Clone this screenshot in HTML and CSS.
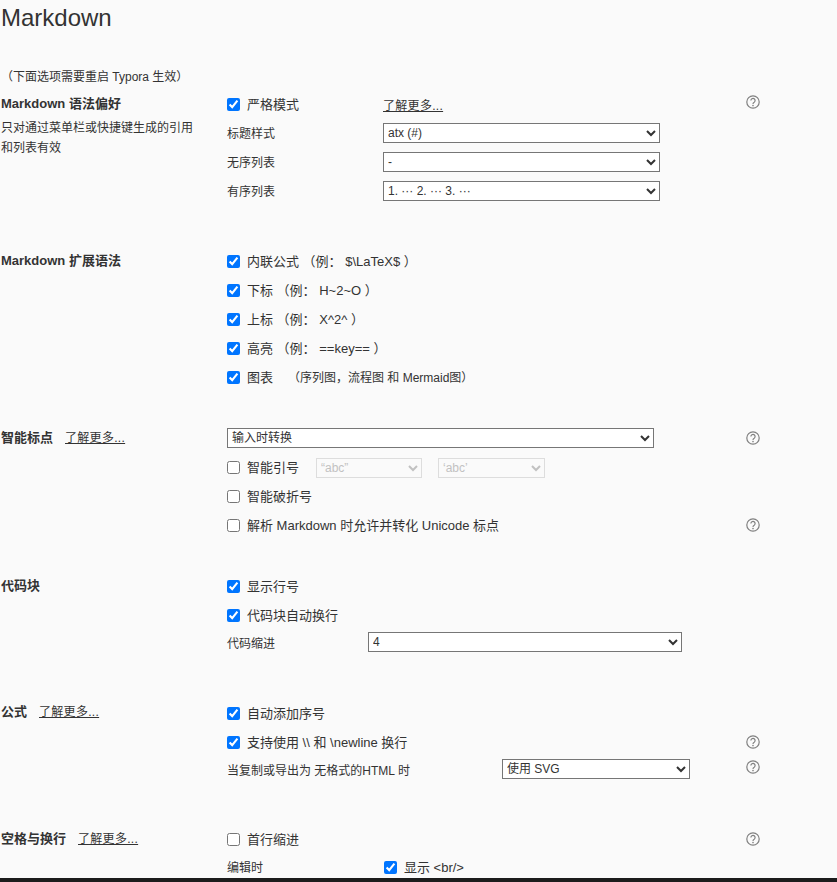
FILE: index.html
```html
<!DOCTYPE html>
<html lang="zh-CN">
<head>
<meta charset="utf-8">
<title>Markdown</title>
<link rel="stylesheet" href="styles.css">
</head>
<body>
<svg class="defs" width="0" height="0" aria-hidden="true">
  <symbol id="help" viewBox="0 0 14 14">
    <circle cx="7" cy="7" r="6.2" fill="none" stroke="#808080" stroke-width="1.2"/>
    <path d="M4.9 5.5a2.1 2.1 0 1 1 3.3 1.7c-.8.5-1.2.9-1.2 1.8" fill="none" stroke="#808080" stroke-width="1.2"/>
    <circle cx="7" cy="10.6" r=".8" fill="#808080"/>
  </symbol>
</svg>
<main class="page">
  <h1 class="title">Markdown</h1>
  <p class="restart">（下面选项需要重启 Typora 生效）</p>

  <section class="section s1">
    <div class="side">
      <div class="heading">Markdown 语法偏好</div>
      <p class="desc">只对通过菜单栏或快捷键生成的引用和列表有效</p>
    </div>
    <div class="rows">
      <div class="row">
        <label class="check w156"><input type="checkbox" checked>严格模式</label>
        <a class="more" href="#">了解更多...</a>
        <svg class="help raised"><use href="#help"/></svg>
      </div>
      <div class="row up"><span class="label w156">标题样式</span><select class="sel w277"><option>atx (#)</option></select></div>
      <div class="row up"><span class="label w156">无序列表</span><select class="sel w277"><option>-</option></select></div>
      <div class="row up"><span class="label w156">有序列表</span><select class="sel w277"><option>1. ··· 2. ··· 3. ···</option></select></div>
    </div>
  </section>

  <section class="section s2">
    <div class="side"><div class="heading">Markdown 扩展语法</div></div>
    <div class="rows">
      <div class="row"><label class="check"><input type="checkbox" checked>内联公式 （例： $\LaTeX$ ）</label></div>
      <div class="row"><label class="check"><input type="checkbox" checked>下标 （例： H~2~O ）</label></div>
      <div class="row"><label class="check"><input type="checkbox" checked>上标 （例： X^2^ ）</label></div>
      <div class="row"><label class="check"><input type="checkbox" checked>高亮 （例： ==key== ）</label></div>
      <div class="row"><label class="check"><input type="checkbox" checked>图表<span class="note">（序列图，流程图 和 Mermaid图）</span></label></div>
    </div>
  </section>

  <section class="section s3">
    <div class="side"><div class="heading">智能标点<a class="more gap" href="#">了解更多...</a></div></div>
    <div class="rows">
      <div class="row up"><select class="sel w427"><option>输入时转换</option></select><svg class="help low"><use href="#help"/></svg></div>
      <div class="row">
        <label class="check w89"><input type="checkbox">智能引号</label>
        <select class="sel w106" disabled><option>“abc”</option></select>
        <select class="sel w107 ml16" disabled><option>‘abc’</option></select>
      </div>
      <div class="row"><label class="check"><input type="checkbox">智能破折号</label></div>
      <div class="row"><label class="check"><input type="checkbox">解析 Markdown 时允许并转化 Unicode 标点</label><svg class="help"><use href="#help"/></svg></div>
    </div>
  </section>

  <section class="section s4">
    <div class="side"><div class="heading">代码块</div></div>
    <div class="rows">
      <div class="row"><label class="check"><input type="checkbox" checked>显示行号</label></div>
      <div class="row"><label class="check"><input type="checkbox" checked>代码块自动换行</label></div>
      <div class="row short up"><span class="label w141">代码缩进</span><select class="sel w314"><option>4</option></select></div>
    </div>
  </section>

  <section class="section s5">
    <div class="side"><div class="heading">公式<a class="more gap" href="#">了解更多...</a></div></div>
    <div class="rows">
      <div class="row"><label class="check"><input type="checkbox" checked>自动添加序号</label></div>
      <div class="row"><label class="check"><input type="checkbox" checked>支持使用 \\ 和 \newline 换行</label><svg class="help"><use href="#help"/></svg></div>
      <div class="row short up"><span class="label w275">当复制或导出为 无格式的HTML 时</span><select class="sel w188"><option>使用 SVG</option></select><svg class="help mid"><use href="#help"/></svg></div>
    </div>
  </section>

  <section class="section s6">
    <div class="side"><div class="heading">空格与换行<a class="more gap" href="#">了解更多...</a></div></div>
    <div class="rows">
      <div class="row"><label class="check"><input type="checkbox">首行缩进</label><svg class="help"><use href="#help"/></svg></div>
      <div class="row short"><span class="label w157">编辑时</span><label class="check"><input type="checkbox" checked>显示 &lt;br/&gt;</label></div>
    </div>
  </section>
</main>
<div class="bar"></div>
</body>
</html>
```
FILE: styles.css
```css
* { box-sizing: border-box; }
html, body { margin: 0; height: 882px; overflow: hidden; }
body {
  display: flex;
  flex-direction: column;
  background: #fafafa;
  color: #333;
  font-family: "Liberation Sans", "Noto Sans CJK SC", sans-serif;
  font-size: 13px;
}
.defs { position: absolute; }
.page { flex: 1; min-height: 0; overflow: hidden; padding-left: 1px; }
.bar { height: 4px; background: #1c1c1c; }
.title { margin: 0; padding-top: 3px; font-size: 24px; font-weight: 400; line-height: 30px; }
.restart { margin: 35px 0 0; line-height: 18px; font-size: 12px; }
.section { display: flex; }
.s1 { margin-top: 4px; }
.s2 { margin-top: 41px; }
.s3 { margin-top: 32px; }
.s4 { margin-top: 32px; }
.s5 { margin-top: 43px; }
.s5 .side { padding-top: 4px; }
.s6 { margin-top: 42px; }
.side { width: 226px; flex: none; padding-top: 5px; }
.heading { font-weight: 700; line-height: 18px; }
.desc { margin: 5px 0 0; width: 200px; font-size: 12px; line-height: 20px; }
.rows { flex: 1; padding-right: 77px; }
.row { display: flex; align-items: center; height: 29px; font-size: 13px; }
.row.short { height: 26px; }
.row.up { padding-bottom: 2px; }
.check { display: flex; align-items: center; padding-bottom: 2px; }
.check input { width: 13px; height: 13px; margin: 2px 7px 0 0; flex: none; }
.label { font-size: 12px; flex: none; padding-bottom: 2px; }
.row.up .label { padding-bottom: 0; }
.note { margin-left: 15px; font-size: 12px; }
.more { color: #333; font-size: 12px; letter-spacing: .3px; text-decoration: underline; font-weight: 400; }
.more.gap { margin-left: 12px; }
.help { width: 14px; height: 14px; margin-left: auto; margin-bottom: 2px; flex: none; }
.help.raised { margin-bottom: 6px; }
.help.low { margin-bottom: 0; }
.help.mid { margin-bottom: 4px; }
.sel {
  height: 20px;
  padding: 0;
  border: 1px solid #767676;
  border-radius: 0;
  background-color: #fff;
  color: #333;
  font-family: "Liberation Sans", "Noto Sans CJK SC", sans-serif;
  font-size: 12px;
  flex: none;
}
.sel:disabled { border-color: rgba(118, 118, 118, .3); background-color: #fafafa; color: #aaa; }
.w89 { width: 89px; flex: none; }
.w141 { width: 141px; }
.w156 { width: 156px; flex: none; }
.w157 { width: 157px; }
.w275 { width: 275px; }
.w106 { width: 106px; }
.w107 { width: 107px; }
.w188 { width: 188px; }
.w277 { width: 277px; }
.w314 { width: 314px; }
.w427 { width: 427px; }
.ml16 { margin-left: 16px; }
```
